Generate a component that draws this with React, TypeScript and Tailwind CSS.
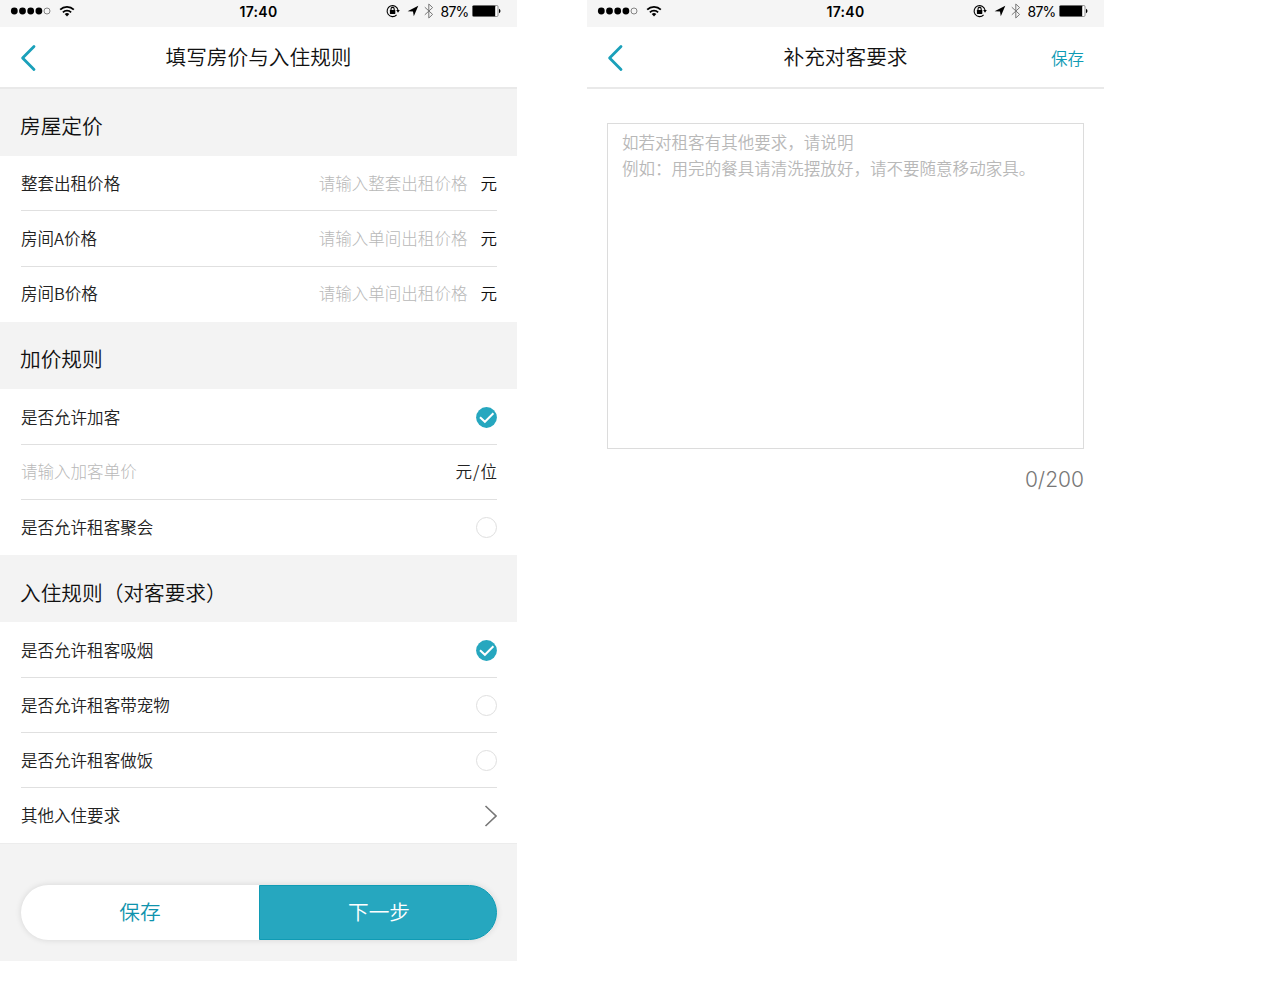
import React from 'react';

interface Row {
  label: string;
  height: string;
  placeholder?: string;
  unit?: string;
  muted?: boolean;
  checked?: boolean;
  arrow?: boolean;
}

interface Section {
  title: string;
  height: string;
  rows: Row[];
}

const sections: Section[] = [
  {
    title: '房屋定价',
    height: 'h-[67px] pt-[5px]',
    rows: [
      { label: '整套出租价格', height: 'h-[55px]', placeholder: '请输入整套出租价格', unit: '元' },
      { label: '房间A价格', height: 'h-[56px]', placeholder: '请输入单间出租价格', unit: '元' },
      { label: '房间B价格', height: 'h-[55px] pb-0.5', placeholder: '请输入单间出租价格', unit: '元' },
    ],
  },
  {
    title: '加价规则',
    height: 'h-[67px] pt-[6px]',
    rows: [
      { label: '是否允许加客', height: 'h-[56px] pt-px', checked: true },
      { label: '请输入加客单价', height: 'h-[55px] pb-px', muted: true, unit: '元/位' },
      { label: '是否允许租客聚会', height: 'h-[55px]', checked: false },
    ],
  },
  {
    title: '入住规则（对客要求）',
    height: 'h-[67px] pt-[7px]',
    rows: [
      { label: '是否允许租客吸烟', height: 'h-[56px] pt-px', checked: true },
      { label: '是否允许租客带宠物', height: 'h-[55px]', checked: false },
      { label: '是否允许租客做饭', height: 'h-[55px]', checked: false },
      { label: '其他入住要求', height: 'h-[55px]', arrow: true },
    ],
  },
];

function StatusBar() {
  return (
    <div className="grid h-[27px] grid-cols-3 items-center bg-[#f5f5f5] pb-[5px] text-black">
      <div className="flex items-center pl-[10px]">
        <svg width="42" height="10" viewBox="0 0 42 10">
          <circle cx="4.3" cy="5" r="3.4" />
          <circle cx="12.5" cy="5" r="3.4" />
          <circle cx="20.7" cy="5" r="3.4" />
          <circle cx="28.9" cy="5" r="3.4" />
          <circle cx="37" cy="5" r="3" fill="none" stroke="#555" strokeWidth="0.7" />
        </svg>
        <svg className="ml-[7px]" width="16" height="12" viewBox="0 0 16 12" fill="none" stroke="#000" strokeWidth="1.8">
          <path d="M1.2 4.6a9.6 9.6 0 0 1 13.6 0" />
          <path d="M3.9 7.3a5.8 5.8 0 0 1 8.2 0" />
          <path d="M8 11.4 5.7 9.1a3.3 3.3 0 0 1 4.6 0z" fill="#000" stroke="none" />
        </svg>
      </div>
      <span className="pt-px text-center font-[Inter] text-[14px] leading-none font-semibold tracking-[0.3px]">17:40</span>
      <div className="flex items-center justify-end pr-[16px]">
        {/* orientation lock */}
        <svg width="14" height="14" viewBox="0 0 14 14" fill="none" stroke="#000">
          <path d="M10.6 10.9A5.5 5.5 0 1 1 12 6" strokeWidth="1.1" />
          <path d="M10.2 6h3.6l-1.8 2.8z" fill="#000" stroke="none" />
          <rect x="3.9" y="6" width="5.4" height="4" rx="0.4" fill="#000" stroke="none" />
          <path d="M5 6.5V5a1.6 1.6 0 0 1 3.2 0v1.5" strokeWidth="1.1" />
        </svg>
        <svg className="ml-[7px]" width="12" height="12" viewBox="0 0 12 12">
          <path d="M11.3 0.8 6.8 11.2 6 6.6 0.6 6.2z" />
        </svg>
        <svg className="ml-[5px]" width="10" height="16" viewBox="0 0 10 16" fill="none" stroke="#777" strokeWidth="1">
          <path d="M0.8 4.2 8.6 11.4 4.8 15V1l3.8 3.6L0.8 11.8" />
        </svg>
        <span className="ml-[7px] pt-px font-[Inter] text-[14px] leading-none tracking-[-0.8px]">87%</span>
        <svg className="ml-[3.5px]" width="29" height="12" viewBox="0 0 29 12">
          <rect x="0.5" y="0.5" width="25.5" height="11" rx="1.2" fill="#fff" stroke="#777" strokeWidth="0.8" />
          <rect x="0.7" y="0.7" width="22.5" height="10.6" rx="0.6" />
          <path d="M27 3.8c2 0.8 2 3.6 0 4.4z" />
        </svg>
      </div>
    </div>
  );
}

function NavBar({ title, action }: { title: string; action?: string }) {
  return (
    <div className="grid h-[62px] grid-cols-[1fr_auto_1fr] items-center border-b-2 border-[#e9e9e9] bg-white px-5">
      <svg className="mt-px" width="16" height="28" viewBox="0 0 16 28" fill="none" stroke="#1aa0ba" strokeWidth="2.8" strokeLinecap="round" strokeLinejoin="round">
        <path d="M14 2.4 2.6 14 14 25.6" />
      </svg>
      <h1 className="pb-px text-[20.68px] leading-none font-[350] text-[#111]">{title}</h1>
      <span className="pt-0.5 text-right text-[16.54px] leading-none font-[350] text-[#0f9bb5]">{action}</span>
    </div>
  );
}

function Radio({ checked }: { checked: boolean }) {
  if (!checked) {
    return <span className="h-[21px] w-[21px] rounded-full border border-[#dfdfdf]" />;
  }
  return (
    <svg width="21" height="21" viewBox="0 0 21 21" fill="none">
      <circle cx="10.5" cy="10.5" r="10.4" fill="#26a7bf" />
      <path d="M4 10.2 8.9 14.8 17.4 6.3" stroke="#fff" strokeWidth="2" />
    </svg>
  );
}

function FormRow({ row, last }: { row: Row; last: boolean }) {
  return (
    <div className={`flex items-center justify-between ${row.height} ${last ? '' : 'border-b border-[#e0e0e0]'}`}>
      <span className={row.muted ? 'font-light text-[#b8b8b8]' : 'text-[#222]'}>{row.label}</span>
      <div className="flex items-center">
        {row.placeholder && <span className="mr-[13px] font-light text-[#b8b8b8]">{row.placeholder}</span>}
        {row.unit && <span className={row.muted ? '-mr-px tracking-[1px] text-[#222]' : 'text-[#111]'}>{row.unit}</span>}
        {row.checked !== undefined && <Radio checked={row.checked} />}
        {row.arrow && (
          <svg width="13" height="22" viewBox="0 0 13 22" fill="none" stroke="#777" strokeWidth="1.6">
            <path d="M1.5 1 12 11 1.5 21" />
          </svg>
        )}
      </div>
    </div>
  );
}

export default function App() {
  return (
    <div className="flex min-h-[1002px] items-start gap-[70px] bg-white font-['Noto_Sans_CJK_SC',sans-serif]">
      {/* Price and rules */}
      <div className="w-[517px] bg-[#f3f3f3]">
        <StatusBar />
        <NavBar title="填写房价与入住规则" />
        {sections.map((section) => (
          <div key={section.title}>
            <h2 className={`flex items-center pl-5 text-[20.68px] leading-none font-[350] text-[#111] ${section.height}`}>
              {section.title}
            </h2>
            <div className="bg-white px-5 pl-[21px] text-[16.54px] leading-none font-[350]">
              {section.rows.map((row, index) => (
                <FormRow key={row.label} row={row} last={index === section.rows.length - 1} />
              ))}
            </div>
          </div>
        ))}
        <div className="h-[118px] border-t border-[#ececec] pt-[41px] pr-5 pl-[21px]">
          <div className="flex h-[55px] rounded-full bg-white text-[20.68px] leading-none font-[350] shadow-[0_0_6px_rgba(0,0,0,0.12)]">
            <button className="w-[238px] pb-0.5 text-[#0f93ad]">保存</button>
            <button className="flex-1 rounded-r-full border border-[#109bb4] bg-[#26a7bf] pb-0.5 pl-0.5 text-white">下一步</button>
          </div>
        </div>
      </div>

      {/* Extra requirements */}
      <div className="w-[517px] bg-white">
        <StatusBar />
        <NavBar title="补充对客要求" action="保存" />
        <div className="px-5 pt-[34px]">
          <div className="h-[326px] border border-[#dcdcdc] px-[14px] pt-[5px] text-[16.54px] leading-[26.4px] font-[350] whitespace-nowrap text-[#b8b8b8]">
            <p>如若对租客有其他要求，请说明</p>
            <p>例如：用完的餐具请清洗摆放好，请不要随意移动家具。</p>
          </div>
          <div className="mt-[19px] text-right font-[Inter] text-[21px] leading-6 font-light text-[#777]">0/200</div>
        </div>
      </div>
    </div>
  );
}
